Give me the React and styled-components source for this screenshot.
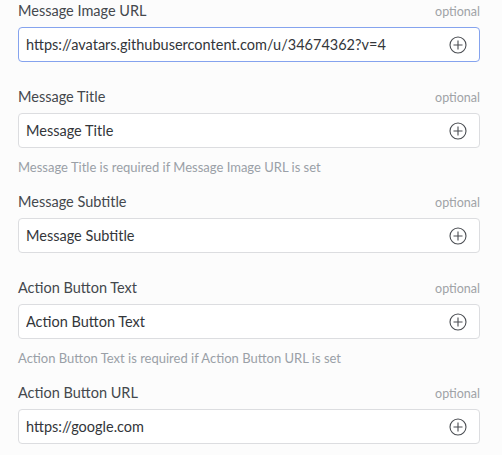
import React from "react";
import styled, { createGlobalStyle } from "styled-components";

const GlobalStyle = createGlobalStyle`
  html, body {
    margin: 0;
    padding: 0;
    background: #fcfcfc;
  }
  body {
    font-family: "Lato", "Open Sans", sans-serif;
    color: #3f4348;
  }
`;

const Form = styled.div`
  display: flex;
  flex-direction: column;
  padding: 2px 22px 0 18px;
`;

const Field = styled.div`
  display: flex;
  flex-direction: column;
  margin-bottom: ${(p) => (p.hasHelp ? "18px" : "26px")};
`;

const LabelRow = styled.div`
  display: flex;
  justify-content: space-between;
  align-items: baseline;
  height: 20px;
  margin-bottom: 5px;
`;

const Label = styled.label`
  font-size: 14.5px;
  color: #44484d;
`;

const Optional = styled.span`
  font-size: 12.5px;
  color: #a0a3a7;
`;

const InputBox = styled.div`
  display: flex;
  align-items: center;
  height: 33px;
  padding: 0 12px 0 7px;
  background: #fff;
  border: 1px solid ${(p) => (p.focused ? "#85a3ee" : "#dcdde0")};
  border-radius: 4px;
`;

const Value = styled.span`
  flex: 1;
  font-size: 14.5px;
  color: #33363a;
  white-space: nowrap;
  overflow: hidden;
`;

const Help = styled.div`
  font-size: 13px;
  color: #9aa0a7;
  margin-top: 11px;
`;

const PlusIcon = () => (
  <svg width="18" height="18" viewBox="0 0 18 18" fill="none" stroke="#4a4d52" strokeWidth="1.1">
    <circle cx="9" cy="9" r="8" />
    <path d="M9 4.5v9M4.5 9h9" />
  </svg>
);

const fields = [
  { label: "Message Image URL", value: "https://avatars.githubusercontent.com/u/34674362?v=4", focused: true },
  { label: "Message Title", value: "Message Title", help: "Message Title is required if Message Image URL is set" },
  { label: "Message Subtitle", value: "Message Subtitle" },
  { label: "Action Button Text", value: "Action Button Text", help: "Action Button Text is required if Action Button URL is set" },
  { label: "Action Button URL", value: "https://google.com" },
];

export default function App() {
  return (
    <>
      <GlobalStyle />
      <Form>
        {fields.map((f) => (
          <Field key={f.label} hasHelp={!!f.help}>
            <LabelRow>
              <Label>{f.label}</Label>
              <Optional>optional</Optional>
            </LabelRow>
            <InputBox focused={f.focused}>
              <Value>{f.value}</Value>
              <PlusIcon />
            </InputBox>
            {f.help && <Help>{f.help}</Help>}
          </Field>
        ))}
      </Form>
    </>
  );
}
